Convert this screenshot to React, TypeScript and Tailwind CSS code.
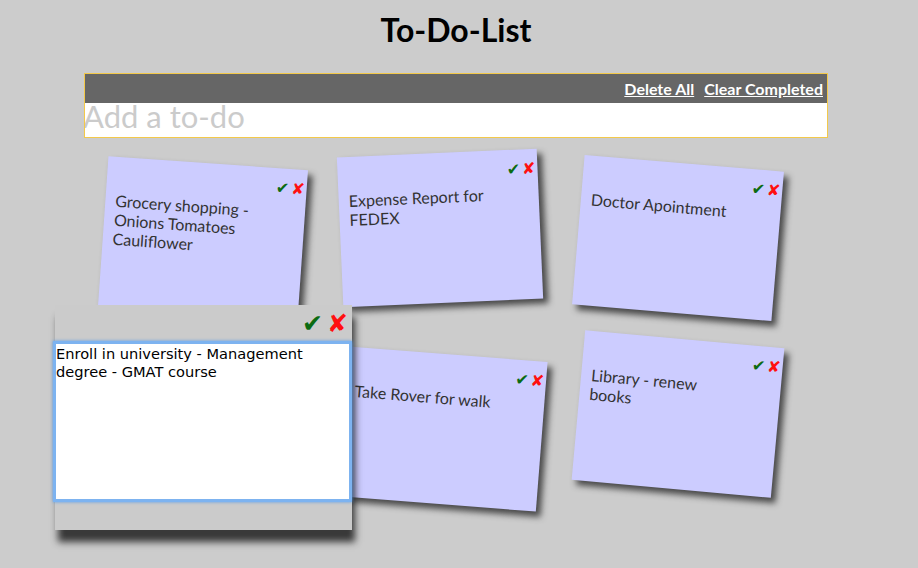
import React from "react";

type Note = {
  text: string;
  cls: string;
};

const notes: Note[] = [
  { text: "Grocery shopping - Onions Tomatoes Cauliflower", cls: "rotate-[4deg] translate-x-[4px] translate-y-[4px]" },
  { text: "Expense Report for FEDEX", cls: "-rotate-[2.5deg] translate-x-[2px] -translate-y-[6px]" },
  { text: "Doctor Apointment", cls: "rotate-[4.8deg] translate-x-[1px] translate-y-[4px]" },
];

const notes2: Note[] = [
  { text: "Take Rover for walk", cls: "rotate-[4.5deg] translate-x-[4px] translate-y-[10px]" },
  { text: "Library - renew books", cls: "rotate-[5.2deg] translate-x-[1px] -translate-y-[5px]" },
];

function Icons({ big }: { big?: boolean }) {
  return (
    <div
      className={
        big
          ? "flex justify-end gap-[4px] pr-[4px] pt-[5px] h-[32px] text-[25px] leading-[28px] font-['DejaVu_Sans',sans-serif]"
          : "flex justify-end gap-[2px] pr-[2px] pt-[11px] h-[34px] text-[16px] leading-[18px] font-['DejaVu_Sans',sans-serif]"
      }
    >
      <span className="text-[#0b6b12]">✔</span>
      <span className="text-[#ff1010]">✘</span>
    </div>
  );
}

function StickyNote({ note }: { note: Note }) {
  return (
    <div
      className={
        "w-[200px] h-[150px] bg-[#ccccff] shadow-[5px_5px_6px_rgba(40,40,40,0.8)] " +
        note.cls
      }
    >
      <Icons />
      <p className="pl-[10px] w-[162px] text-[16px] leading-[19px] text-[#333333]">
        {note.text}
      </p>
    </div>
  );
}

export default function App() {
  return (
    <div className="min-h-screen bg-[#cccccc] font-['Lato','Open_Sans',sans-serif] overflow-hidden">
      <div className="ml-[84px] w-[744px] pt-[10px]">
        <h1 className="text-center text-[32px] font-bold leading-[40px] text-black">
          To-Do-List
        </h1>
        <div className="mt-[23px] border border-[#f3c94a]">
          <div className="flex h-[29px] items-center justify-end gap-[10px] bg-[#666666] pr-[4px]">
            <a className="text-[16px] font-bold leading-[20px] text-white underline cursor-pointer">
              Delete All
            </a>
            <a className="text-[16px] font-bold leading-[20px] text-white underline cursor-pointer">
              Clear Completed
            </a>
          </div>
          <input
            className="block w-full h-[34px] bg-white pb-[8px] indent-[-2px] text-[31px] leading-[26px] text-black outline-none placeholder:text-[#cbcbcb]"
            placeholder="Add a to-do"
          />
        </div>
        <div className="mt-[21px] grid grid-cols-[200px_200px_200px] gap-x-[39px] gap-y-[35px] pl-[15px]">
          {notes.map((n) => (
            <StickyNote key={n.text} note={n} />
          ))}
          <div className="relative z-10 -ml-[44px] -mr-[53px] -mt-[39px] -mb-[36px] w-[297px] h-[225px] bg-[#cbcbcb] shadow-[3px_12px_7px_rgba(30,30,30,0.85)] flex flex-col">
            <Icons big />
            <textarea
              className="block -ml-[2px] mt-[4px] w-[299px] h-[161px] resize-none border-[3px] border-[#7db3f0] bg-white px-[0px] pt-[1px] text-[14.6px] leading-[18px] text-black outline-none shadow-[0_0_3px_#5a9ce6] font-['DejaVu_Sans',sans-serif]"
              defaultValue="Enroll in university - Management degree - GMAT course"
            />
          </div>
          {notes2.map((n) => (
            <StickyNote key={n.text} note={n} />
          ))}
        </div>
      </div>
    </div>
  );
}
